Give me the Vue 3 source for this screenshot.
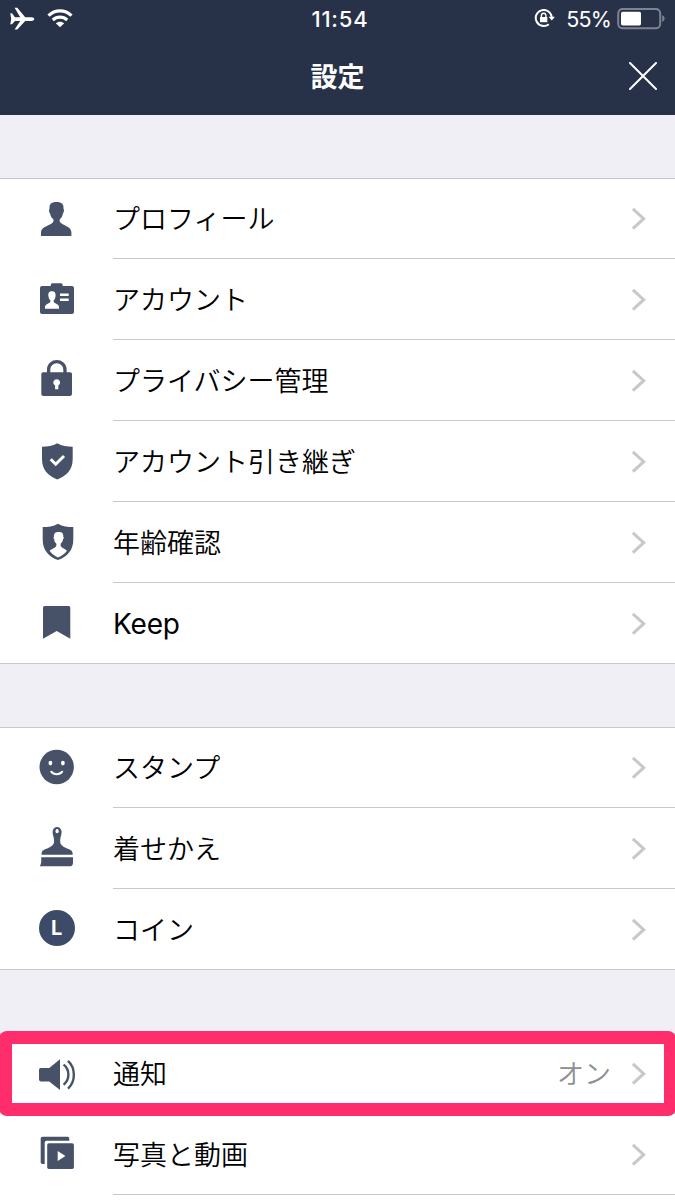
<template>
  <div class="screen">
    <header class="header">
      <div class="status-bar">
        <div class="status-left">
          <svg class="plane" viewBox="0 0 25 24">
            <path
              d="M0.3 6.2H2L5 10.2H10.2L4.6 0.8H7.3L15.2 10.2H21.5C25.2 10.2 25.2 14 21.5 14H15.2L7.3 22.6H4.6L10.2 14H5L2 17.2H0.3L1.2 12Z"
            />
          </svg>
          <svg class="wifi" viewBox="0 0 26 20">
            <path class="wifi-arc" d="M1.5 6.6C8 .2 18 .2 24.5 6.6" />
            <path class="wifi-arc" d="M5.8 11C10 7.2 16 7.2 20.2 11" />
            <path d="M13 18.3L8.8 14.3C11.2 12.1 14.8 12.1 17.2 14.3Z" />
          </svg>
        </div>
        <span class="clock">11:54</span>
        <div class="status-right">
          <svg class="rotation-lock" viewBox="0 0 21 20">
            <path class="ring" d="M17.7 8A8 8 0 1 0 14.8 15.2" />
            <path d="M14.6 7.7H20.9L17.8 11.6Z" />
            <path d="M6 8H13.3V13.2H6Z" />
            <path class="ring thin" d="M7.4 8V6.6C7.4 3.4 11.9 3.4 11.9 6.6V8" />
          </svg>
          <span class="percent">55%</span>
          <svg class="battery" viewBox="0 0 48 22">
            <rect class="battery-case" x="1.2" y="0.9" width="42" height="19.4" rx="4.5" />
            <path class="battery-tip" d="M45.2 7.3C48.4 8.1 48.4 13.1 45.2 13.9Z" />
            <rect x="4" y="3.7" width="20" height="13.7" rx="1.6" />
          </svg>
        </div>
      </div>
      <div class="nav-bar">
        <h1 class="title">設定</h1>
        <svg class="close" viewBox="0 0 28 28">
          <path d="M1 1L27 27M27 1L1 27" />
        </svg>
      </div>
    </header>

    <main class="groups">
      <ul v-for="(group, index) in groups" :key="index" class="group">
        <li v-for="item in group" :key="item.label" class="row">
          <svg class="icon" viewBox="0 0 42 40">
            <template v-if="item.icon === 'profile'">
              <path
                d="M5 38V34.5C5 29.5 11.5 28.2 15.6 25.6C17.6 24.2 17.8 22.6 17.3 21.2C15.2 19.8 14.4 17.4 14.1 15.4C12.8 14.6 12.8 11.2 13.6 10.6C13 6.4 15 4 20.5 4C26 4 28 6.4 27.4 10.6C28.2 11.2 28.2 14.6 26.9 15.4C26.6 17.4 25.8 19.8 23.8 21.2C23.3 22.6 23.6 24.2 25.6 25.6C29.5 28.2 35.4 29.5 35.4 34.5V38Z"
              />
            </template>
            <template v-else-if="item.icon === 'account'">
              <path
                d="M6 7H14.7V6Q14.7 4.3 16.4 4.3H25Q26.7 4.3 26.7 6V7H36Q38 7 38 9V33Q38 35 36 35H6Q4 35 4 33V9Q4 7 6 7Z"
              />
              <path
                class="cutout"
                d="M9 29.7V28C9 25.2 12.6 24.6 13.8 23.4C14.6 22.7 14.5 21.5 14.2 21C12.7 20 12.8 18.3 12.5 17.5C11.8 14 13.2 12.3 16 12.3C18.8 12.3 20 14 19.5 17.5C19.2 18.3 19.3 20 17.9 21C17.6 21.5 17.5 22.7 18.2 23.4C19.4 24.6 23 25.2 23 28V29.7ZM24 14.4H32.7V16.9H24ZM24 19.6H32.7V22.1H24Z"
              />
            </template>
            <template v-else-if="item.icon === 'lock'">
              <path class="line shackle" d="M12.6 14V9.7C12.6-1 29-1 29 9.7V14" />
              <rect x="5.3" y="12.3" width="30.7" height="23.6" rx="1.8" />
              <path class="cutout" d="M19.1 25.6A3.4 3.4 0 1 1 22.3 25.6V29.2H19.1Z" />
            </template>
            <template v-else-if="item.icon === 'shield'">
              <path
                d="M21.3 2.3C26 5.2 31 5.7 36.7 5.7V18C36.7 29 30.5 34.8 21.3 38.6C12.2 34.8 6 29 6 18V5.7C11.6 5.7 16.5 5.2 21.3 2.3Z"
              />
              <path class="cut-line" d="M14.7 18.2L19.7 23.2L28 15" />
            </template>
            <template v-else-if="item.icon === 'age'">
              <path
                d="M22 1.7C26.7 4.6 31.7 5.1 37.3 5.1V17.4C37.3 28.4 31.2 34.3 22 38.1C12.8 34.3 6.7 28.4 6.7 17.4V5.1C12.3 5.1 17.2 4.6 22 1.7Z"
              />
              <path
                class="cutout"
                d="M13.6 28.8C15.7 26.6 19 26.2 20 24.5C20.7 23.2 20.4 22 20 21.3C18.4 20.1 18.3 18.2 18.2 17C16.9 16.1 17.6 14.9 18 14.7C17.7 11.2 19.4 10 22.7 10C26 10 27.6 11.2 27.2 14.7C27.8 14.9 28.3 16.1 27.1 17C26.9 18.2 26.6 20.1 25 21.3C24.6 22 24.4 23.2 25 24.5C26 26.2 29.2 26.6 31 28.7C28.5 31.8 25.6 33.9 22 35.6C18.8 34.1 15.8 32 13.6 28.8Z"
              />
            </template>
            <template v-else-if="item.icon === 'keep'">
              <path d="M8.7 3H32.6Q34.3 3 34.3 4.7V35.8L20.7 28L7 35.8V4.7Q7 3 8.7 3Z" />
            </template>
            <template v-else-if="item.icon === 'smile'">
              <circle cx="20.7" cy="20" r="17.2" />
              <ellipse class="cutout" cx="14.4" cy="16.1" rx="1.9" ry="2.4" />
              <ellipse class="cutout" cx="26.9" cy="16.1" rx="1.9" ry="2.4" />
              <path class="cut-line mouth" d="M15.2 24.7C17.6 28.1 23.8 28.1 26.2 24.7" />
            </template>
            <template v-else-if="item.icon === 'brush'">
              <path
                d="M5.6 26.8C5.3 21.6 8.6 22 12.6 19.8C17.4 17.4 18.4 15.6 18 11.7C17.8 8.6 16.5 6.6 16.6 3.7C16.8-2.6 25.3-2.6 25.6 3.7C25.7 6.6 24.4 8.6 24.2 11.7C23.9 15.6 25 17.4 29.6 19.8C33.6 22 37 21.6 36.7 26.8Z"
              />
              <path d="M5.2 29.2H37V35Q36.5 38.2 34.5 38.2H3.7C5.5 36 5.3 32.5 5.2 29.2Z" />
              <ellipse class="cutout" cx="21.1" cy="3.2" rx="1.6" ry="2.1" />
            </template>
            <template v-else-if="item.icon === 'coin'">
              <circle class="coin" cx="21" cy="19" r="18" />
              <text x="14.9" y="26.3">L</text>
            </template>
            <template v-else-if="item.icon === 'sound'">
              <path d="M4.8 15H13.2L24 6.3V37L13.2 28.4H4.8Q3 28.4 3 26.6V16.8Q3 15 4.8 15Z" />
              <path class="line" d="M27.6 11.6C34 16.5 34 26.7 27.6 31.7M32 7.8C39.8 15 39.8 28.5 32 35.6" />
            </template>
            <template v-else>
              <path
                d="M6.5 2.7H31.5Q33.3 2.7 33.3 4.5V6.7H10.5Q8.7 6.7 8.7 8.5V30H6.5Q4.7 30 4.7 28.2V4.5Q4.7 2.7 6.5 2.7Z"
              />
              <rect x="11.2" y="9.3" width="26.7" height="25.8" rx="1.8" />
              <path class="cutout" d="M21.7 17L29.4 22L21.7 27Z" />
            </template>
          </svg>
          <div class="row-body">
            <span class="label" :class="{ latin: item.icon === 'keep' }">{{ item.label }}</span>
            <span v-if="item.value" class="value">{{ item.value }}</span>
            <svg class="chevron" viewBox="0 0 16 40">
              <path d="M1.9 10.8L12.7 20.7L1.9 30.6" />
            </svg>
          </div>
        </li>
      </ul>
    </main>

    <div class="highlight"></div>
  </div>
</template>

<script setup>
const groups = [
  [
    { icon: 'profile', label: 'プロフィール' },
    { icon: 'account', label: 'アカウント' },
    { icon: 'lock', label: 'プライバシー管理' },
    { icon: 'shield', label: 'アカウント引き継ぎ' },
    { icon: 'age', label: '年齢確認' },
    { icon: 'keep', label: 'Keep' },
  ],
  [
    { icon: 'smile', label: 'スタンプ' },
    { icon: 'brush', label: '着せかえ' },
    { icon: 'coin', label: 'コイン' },
  ],
  [
    { icon: 'sound', label: '通知', value: 'オン' },
    { icon: 'media', label: '写真と動画' },
  ],
]

defineOptions({
  name: 'SettingsPage',
})
</script>

<style>
body {
  margin: 0;
  background: #efeff5;
}
</style>

<style scoped>
.screen {
  position: relative;
  width: 675px;
  height: 1200px;
  overflow: hidden;
  background: #efeff5;
  font-family: Inter, 'Noto Sans CJK JP', sans-serif;
}

.header {
  height: 115px;
  background: #273148;
  color: #fff;
}

.status-bar {
  display: grid;
  grid-template-columns: 1fr auto 1fr;
  align-items: center;
  height: 37px;
  padding: 0 10px;
  fill: #fff;
}

.status-left,
.status-right {
  display: flex;
  align-items: center;
}

.status-left {
  gap: 12px;
}

.status-right {
  justify-content: flex-end;
}

.plane {
  width: 25px;
  height: 24px;
}

.wifi {
  width: 26px;
  height: 20px;
}

.wifi-arc {
  fill: none;
  stroke: #fff;
  stroke-width: 3.2;
}

.clock {
  padding-left: 5px;
  font-size: 22px;
  font-weight: 500;
  letter-spacing: 0.8px;
}

.rotation-lock {
  width: 21px;
  height: 20px;
  margin-right: 11px;
}

.ring {
  fill: none;
  stroke: #fff;
  stroke-width: 2;
}

.thin {
  stroke-width: 1.4;
}

.percent {
  margin-right: 6px;
  font-size: 21.5px;
  letter-spacing: -0.8px;
}

.battery {
  width: 48px;
  height: 22px;
}

.battery-case {
  fill: none;
  stroke: #7d8391;
  stroke-width: 2;
}

.battery-tip {
  fill: #7d8391;
}

.nav-bar {
  display: grid;
  grid-template-columns: 1fr auto 1fr;
  align-items: center;
  height: 78px;
  padding: 0 18px;
}

.title {
  grid-column: 2;
  margin: 0;
  padding-top: 3px;
  font-size: 27px;
  font-weight: 700;
  line-height: 40px;
}

.close {
  justify-self: end;
  width: 28px;
  height: 28px;
  fill: none;
  stroke: #fff;
  stroke-width: 2;
  stroke-linecap: round;
}

.groups {
  display: flex;
  flex-direction: column;
  gap: 63px;
  padding-top: 63px;
}

.group {
  margin: 0;
  padding: 0;
  list-style: none;
  background: #fff;
  border-top: 1px solid #c8c7cc;
}

.group:not(:last-child) {
  border-bottom: 1px solid #c8c7cc;
}

.group:last-child {
  padding-bottom: 5px;
}

.row {
  display: flex;
  height: 81px;
  padding-left: 36px;
}

.row,
.row-body {
  box-sizing: border-box;
}

.row:first-child,
.group:not(:last-child) .row:last-child {
  height: 80px;
}

.icon {
  flex: none;
  width: 42px;
  height: 40px;
  margin: 20px 35px 0 0;
  overflow: visible;
  fill: #475269;
}

.row:first-child .icon {
  margin-top: 19px;
}

.row-body {
  display: flex;
  flex: 1;
  align-items: flex-start;
  padding: 20px 28px 0 0;
  border-bottom: 1px solid #c8c7cc;
}

.row:first-child .row-body {
  padding-top: 19px;
}

.group:not(:last-child) .row:last-child .row-body {
  border-bottom: 0;
}

.label {
  flex: 1;
}

.label,
.value {
  padding-top: 2px;
  font-size: 27px;
  font-weight: 350;
  line-height: 40px;
  color: #000;
}

.label.latin {
  padding-top: 1px;
  font-size: 28px;
  font-weight: 400;
  letter-spacing: -0.2px;
}

.value {
  margin-right: 20px;
  color: #8e8e93;
}

.chevron {
  width: 16px;
  height: 40px;
  fill: none;
  stroke: #c7c7cc;
  stroke-width: 3;
}

.cutout {
  fill: #fff;
}

.line {
  fill: none;
  stroke: #475269;
  stroke-width: 2.4;
}

.shackle {
  stroke-width: 3.3;
}

.cut-line {
  fill: none;
  stroke: #fff;
  stroke-width: 3;
}

.mouth {
  stroke-width: 2;
  stroke-linecap: round;
}

.coin {
  fill: #3c4b68;
}

.icon text {
  fill: #fff;
  font-size: 20px;
  font-weight: 700;
}

/* frame laid over the notification row */
.highlight {
  position: absolute;
  top: 1031px;
  left: -1px;
  box-sizing: border-box;
  width: 677px;
  height: 85px;
  border: 13px solid #ff2d6c;
  border-right-width: 12px;
  border-radius: 8px;
}
</style>
